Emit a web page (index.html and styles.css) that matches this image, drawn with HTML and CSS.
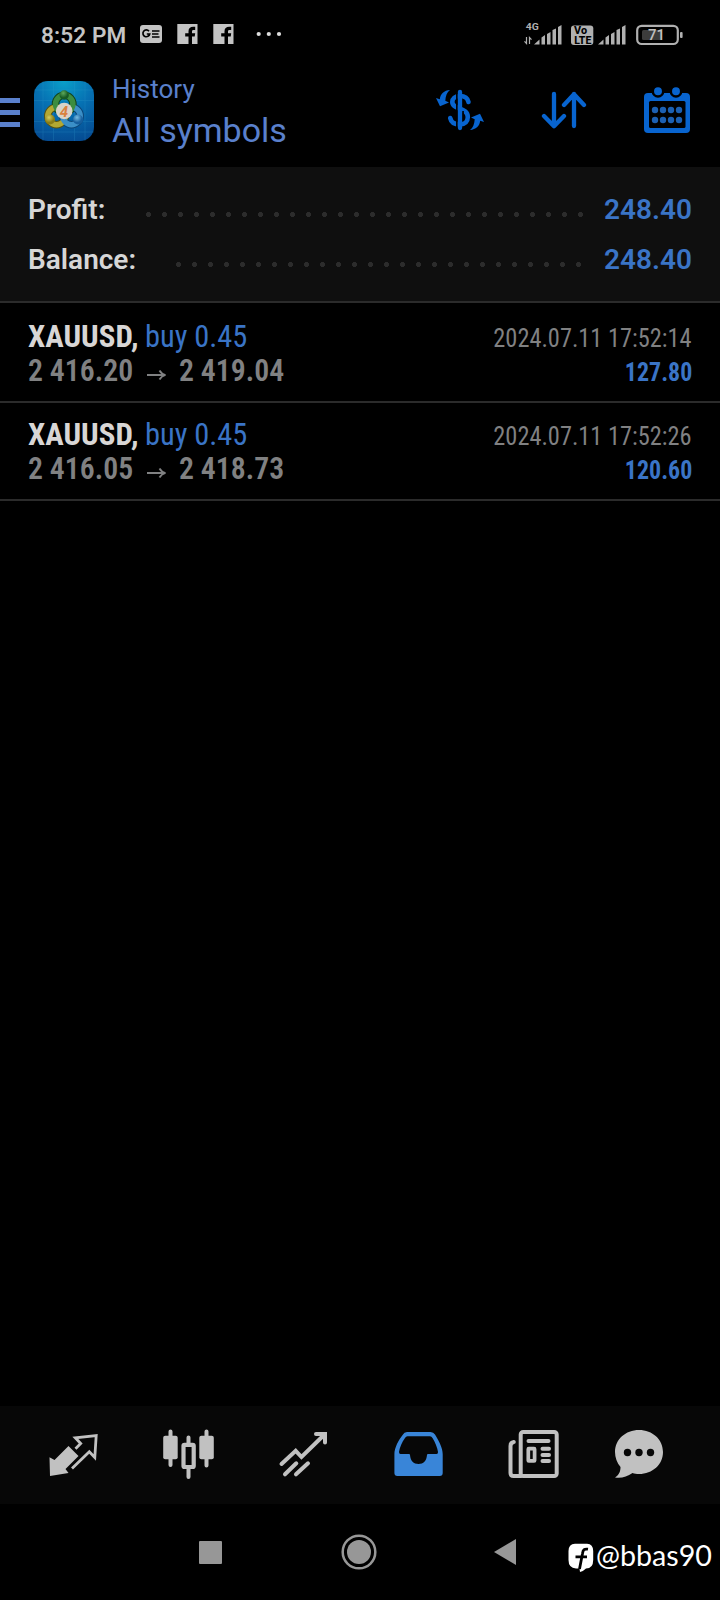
FILE: index.html
```html
<!DOCTYPE html>
<html lang="en">
<head>
<meta charset="utf-8">
<title>History</title>
<link rel="stylesheet" href="styles.css">
</head>
<body>
<div class="screen">
  <div class="status">
    <span class="clock">8:52 PM</span>
    <svg class="notif" width="146" height="24" viewBox="138 22 146 24">
      <rect x="140" y="25" width="22" height="18" rx="3" fill="#c4c4c4"/>
      <path d="M149 31.2A3.4 3.4 0 1 0 149.7 34H146.8" fill="none" stroke="#000" stroke-width="1.7"/>
      <path d="M152 31h7.500M152 34h6.500M152 37h7.500" stroke="#000" stroke-width="1.500"/>
      <g id="fb"><rect x="177.300" y="24" width="20.200" height="20" fill="#c4c4c4"/>
      <path d="M188.500 44v-7.500h-3.300v-3.200h3.300v-2c0-3 1.700-4.600 4.700-4.600h2v3.200h-1.600c-1.300 0-1.600.7-1.600 1.700v1.700h3.200l-.5 3.200h-2.700V44z" fill="#000"/></g>
      <use href="#fb" x="36"/>
      <g fill="#ddd"><circle cx="258.700" cy="34" r="2.100"/><circle cx="268.800" cy="34" r="2.100"/><circle cx="279" cy="34" r="2.100"/></g>
    </svg>
    <svg class="signal" width="164" height="28" viewBox="522 20 164 28">
      <text class="net" x="525.800" y="30" textLength="13" lengthAdjust="spacingAndGlyphs">4G</text>
      <path d="M526.500 37v6.500l-2-2.200M529.500 44v-6.500l2 2.200" fill="none" stroke="#b0b0b0" stroke-width="1.200"/>
      <g id="bars" fill="#b0b0b0"><path d="M534 44.500l5.500-5v5zM541.500 37.500l3.500-2.500v9.500h-3.500zM547 34l3.500-2v12.500H547zM552.500 30l3.500-1.500v16h-3.500zM558 27l3.500-2v19.500H558z"/></g>
      <use href="#bars" x="64"/>
      <rect x="571" y="25.500" width="22.300" height="19.500" rx="3" fill="#b0b0b0"/>
      <text class="volte" x="574" y="34.300" textLength="13" lengthAdjust="spacingAndGlyphs">Vo</text>
      <text class="volte" x="574.300" y="43.500" textLength="17" lengthAdjust="spacingAndGlyphs">LTE</text>
      <rect x="637.200" y="25.800" width="40.600" height="18.200" rx="4.500" fill="none" stroke="#b0b0b0" stroke-width="2.200"/>
      <rect x="642" y="30" width="20" height="10" rx="1.500" fill="#3c3c3c"/>
      <rect x="680" y="32" width="2.600" height="6" rx="1" fill="#b0b0b0"/>
      <text class="batt" x="648" y="40" textLength="17" lengthAdjust="spacingAndGlyphs">71</text>
    </svg>
  </div>

  <header class="head">
    <div class="menu"><i></i><i></i><i></i></div>
    <svg class="logo" width="62" height="62" viewBox="0 0 62 62">
      <defs>
        <radialGradient id="sky" cx=".5" cy="0" r="1.050"><stop offset="0" stop-color="#0aa0c9"/><stop offset=".45" stop-color="#0671b3"/><stop offset="1" stop-color="#054a91"/></radialGradient>
        <radialGradient id="gr" cx=".4" cy=".3"><stop offset="0" stop-color="#5da95b"/><stop offset="1" stop-color="#175a24"/></radialGradient>
        <radialGradient id="ye" cx=".4" cy=".3"><stop offset="0" stop-color="#d7cf5f"/><stop offset="1" stop-color="#897d16"/></radialGradient>
        <radialGradient id="bl" cx=".4" cy=".3"><stop offset="0" stop-color="#76bce3"/><stop offset="1" stop-color="#165f9f"/></radialGradient>
      </defs>
      <rect x="1" y="1" width="60" height="60" rx="14" fill="url(#sky)"/>
      <path d="M20.500 1v60M41.500 1v60M1 20.500h60M1 41.500h60M10 1v60M52 1v60M1 10h60M1 52h60" stroke="#37a0cf" stroke-width=".7" opacity=".3"/>
      <g fill="none" stroke-width="7.500"><circle cx="23.500" cy="36" r="8.700" stroke="#565112"/><circle cx="38.500" cy="36" r="8.700" stroke="#0c4678"/><circle cx="31.200" cy="24" r="8.700" stroke="#12431c"/></g>
      <g fill="none" stroke-width="5.500"><circle cx="23.500" cy="36" r="8.700" stroke="#b3a832"/><circle cx="38.500" cy="36" r="8.700" stroke="#3b8fc7"/><circle cx="31.200" cy="24" r="8.700" stroke="#3c8d40"/></g>
      <circle cx="31.200" cy="15" r="4.700" fill="url(#gr)"/><circle cx="17" cy="39.500" r="5" fill="url(#ye)"/><circle cx="45" cy="39.500" r="5" fill="url(#bl)"/>
      <circle cx="31.200" cy="31" r="8.300" fill="#d8d3c9"/>
      <text class="four" x="26.800" y="36.500">4</text>
    </svg>
    <div class="titles"><span class="t1">History</span><span class="t2">All symbols</span></div>
    <div class="actions">
      <svg width="52" height="44" viewBox="434 89 52 44">
        <path d="M468.500 103C467.500 98.500 464.500 97 460 97C455 97 452.300 99.500 452.300 103C452.300 111 467.800 108 467.800 118C467.800 122.500 465 125.500 460 125.500C454 125.500 451 123 450.200 119" fill="none" stroke="#0864cf" stroke-width="4.600" stroke-linecap="round"/>
        <path d="M456.900 92v38M463 112v10" stroke="#000" stroke-width="1.700"/>
        <path d="M460 93v36" stroke="#0864cf" stroke-width="4.300" stroke-linecap="round"/>
        <path id="swing" d="M450 91C444 91.500 440.500 94.500 439.800 100.200L436 99L440 107.300L449 103.600L445.300 101.800C445.600 97 446.800 93.500 450 91Z" fill="#0864cf"/>
        <use href="#swing" transform="rotate(180 460 111)"/>
      </svg>
      <svg width="46" height="40" viewBox="541 91 46 40"><path d="M554 95v32M544 117l10 10.300L564 117M574 127V95M564 106l10-10.800L584 106" fill="none" stroke="#0864cf" stroke-width="4.300" stroke-linecap="round" stroke-linejoin="round"/></svg>
      <svg width="48" height="50" viewBox="643 85 48 50">
        <rect x="644" y="93" width="46" height="40" rx="4" fill="#0864cf"/>
        <rect x="649" y="101" width="36.500" height="27" rx="1.500" fill="#000"/>
        <g fill="#0864cf" stroke="#000" stroke-width="2.500"><circle cx="658" cy="91.300" r="5.200"/><circle cx="676" cy="91.300" r="5.200"/></g>
        <g fill="#1c60b2"><circle cx="655" cy="110" r="3.200"/><circle cx="663" cy="110" r="3.200"/><circle cx="671" cy="110" r="3.200"/><circle cx="679" cy="110" r="3.200"/><circle cx="655" cy="120" r="3.200"/><circle cx="663" cy="120" r="3.200"/><circle cx="671" cy="120" r="3.200"/><circle cx="679" cy="120" r="3.200"/></g>
      </svg>
    </div>
  </header>

  <section class="summary">
    <div class="sum"><span>Profit:</span><i class="dots d1"></i><b>248.40</b></div>
    <div class="sum"><span>Balance:</span><i class="dots d2"></i><b>248.40</b></div>
  </section>

  <section class="deals">
    <div class="deal">
      <div class="line"><span class="sym">XAUUSD,</span><span class="side">buy 0.45</span><span class="date">2024.07.11 17:52:14</span></div>
      <div class="line"><span class="price">2 416.20</span><svg class="arrow" width="22" height="14" viewBox="0 0 22 14"><path d="M1 7h18M13.500 2.500Q15.500 6 19.500 7Q15.500 8 13.500 11.500" fill="none" stroke="#808182" stroke-width="1.800"/></svg><span class="price">2 419.04</span><b class="gain">127.80</b></div>
    </div>
    <div class="deal">
      <div class="line"><span class="sym">XAUUSD,</span><span class="side">buy 0.45</span><span class="date">2024.07.11 17:52:26</span></div>
      <div class="line"><span class="price">2 416.05</span><svg class="arrow" width="22" height="14" viewBox="0 0 22 14"><path d="M1 7h18M13.500 2.500Q15.500 6 19.500 7Q15.500 8 13.500 11.500" fill="none" stroke="#808182" stroke-width="1.800"/></svg><span class="price">2 418.73</span><b class="gain">120.60</b></div>
    </div>
  </section>

  <nav class="tabs">
    <svg width="52" height="52" viewBox="47 1428 52 52">
      <path d="M49.500 1457.300L54.500 1460L68.500 1446L78.500 1456L65.500 1469L68.500 1473L50 1476Z" fill="#c1c1c1"/>
      <path d="M75.500 1448.800L80.700 1443.500L75.300 1437.800L96.200 1435.500L94.800 1457.500L89.300 1451.700L72 1468.500" fill="none" stroke="#c1c1c1" stroke-width="2.800"/>
    </svg>
    <svg width="53" height="52" viewBox="162 1428 53 52">
      <g fill="#c1c1c1"><rect x="163.200" y="1435.700" width="14.500" height="23.500" rx="2"/><rect x="199.300" y="1435.700" width="14.500" height="23.500" rx="2"/></g>
      <path d="M170.500 1431.500v33.500M206.500 1431.500v34M188.500 1437.500v6M188.500 1469v8" stroke="#c1c1c1" stroke-width="4" stroke-linecap="round"/>
      <rect x="183.500" y="1444.800" width="10.200" height="22.200" rx="1" fill="#070707" stroke="#c1c1c1" stroke-width="4.200"/>
    </svg>
    <svg width="52" height="52" viewBox="278 1428 52 52"><path d="M281.500 1464L295.700 1450.800L301.500 1457L324.500 1434.500M316 1434h9v8.500M285 1474.300L296.300 1463.300M296 1474.300L308 1463.300" fill="none" stroke="#c1c1c1" stroke-width="4" stroke-linecap="round"/></svg>
    <svg width="52" height="52" viewBox="393 1428 52 52"><path fill-rule="evenodd" fill="#3985d8" d="M403 1434.500Q404 1432 407 1432H430.500Q433.500 1432 435 1434.500C439 1441 442.700 1448 442.700 1454V1473Q442.700 1476 439.700 1476H397.400Q394.400 1476 394.400 1473V1454C394.400 1448 398.500 1440 403 1434.500ZM407.500 1436.300Q405.800 1436.300 405 1438C402 1442 399.500 1448 399 1452Q399 1454 400.500 1454H409Q410 1454 410 1455C410.500 1461 413.500 1464 418.500 1464S426.500 1461 427 1455Q427 1454 428 1454H436.500Q438.200 1454 438 1452C437.500 1448 435 1442 432.500 1438Q431.500 1436.300 430 1436.300Z"/></svg>
    <svg width="52" height="52" viewBox="508 1428 52 52">
      <g fill="none" stroke="#c1c1c1" stroke-width="4" stroke-linecap="round"><rect x="520.700" y="1432" width="36" height="44" rx="2.500"/><path d="M513.800 1442Q510.500 1442.500 510.500 1446V1473Q510.500 1476 513.500 1476H521M528.500 1441h20M542.500 1448.800h6.500M542.500 1455h6.500M542.500 1461h6.500" /><rect x="528.300" y="1448.700" width="6.300" height="12.200" rx=".5" stroke-width="3.700"/></g>
    </svg>
    <svg width="52" height="52" viewBox="613 1428 52 52">
      <path d="M639 1430C652.500 1430 663 1439.500 663 1452S652.500 1474 639 1474C636.500 1474 634.500 1473.800 632.500 1473C627 1477 621 1478.500 615 1477.500C619 1475 620.500 1471.500 620.500 1467C617 1463 615 1457.500 615 1452C615 1439.500 625.500 1430 639 1430Z" fill="#c1c1c1"/>
      <g fill="#070707"><circle cx="627.500" cy="1452.500" r="3.700"/><circle cx="639" cy="1452.500" r="3.700"/><circle cx="650.500" cy="1452.500" r="3.700"/></g>
    </svg>
  </nav>

  <div class="sysnav">
    <i class="recent"></i>
    <svg width="36" height="36" viewBox="0 0 36 36"><circle cx="18" cy="18" r="16.300" fill="none" stroke="#979797" stroke-width="2.500"/><circle cx="18" cy="18" r="12" fill="#979797"/></svg>
    <svg class="back" width="24" height="28" viewBox="0 0 24 28"><path d="M1 14L23 1v26Z" fill="#979797"/></svg>
    <svg class="mark" width="150" height="52" viewBox="566 1532 150 52">
      <path d="M575 1543.700H587Q593.200 1544 593.200 1551V1560Q593.200 1568.500 586 1568.500Q583 1571.500 580 1572L579.500 1568.500H576Q568.500 1568 568.500 1560V1551Q568.500 1544 575 1543.700Z" fill="#fff"/>
      <path d="M579.500 1569L582.500 1553.500C583 1549.500 584.500 1548.700 588 1549.200M575.500 1556.800H587" fill="none" stroke="#000" stroke-width="2.800"/>
      <text class="handle" x="596" y="1565.700" textLength="116" lengthAdjust="spacingAndGlyphs">@bbas90</text>
    </svg>
  </div>
</div>
</body>
</html>
```
FILE: styles.css
```css
* { box-sizing: border-box; }
body { margin: 0; background: #000; font-family: Roboto, "Liberation Sans", sans-serif; }
.screen { width: 720px; height: 1600px; display: flex; flex-direction: column; background: #000; overflow: hidden; }
svg { display: block; flex: none; }
span, b { white-space: nowrap; }

.status { height: 68px; padding: 0 34px 0 41px; display: flex; align-items: center; }
.clock { width: 97px; font-size: 22.500px; font-weight: 600; letter-spacing: .15px; color: #c4c4c4; line-height: 68px; padding-top: 1px; }
.signal { margin-left: auto; }
.net { font-size: 9px; font-weight: 700; fill: #b0b0b0; }
.volte { font-size: 10px; font-weight: 800; fill: #000; }
.batt { font-size: 14px; font-weight: 500; fill: #c0c0c0; }

.head { height: 99px; display: flex; align-items: flex-start; }
.menu { display: flex; flex-direction: column; gap: 7px; width: 20px; margin-top: 30px; }
.menu i { height: 5px; background: #5a80cc; }
.logo { margin: 12px 0 0 13px; }
.four { font: italic 700 15px Roboto, sans-serif; fill: #d9813f; }
.titles { display: flex; flex-direction: column; margin: 5px 0 0 17px; color: #5a80cc; }
.t1 { font-size: 26px; line-height: 33px; }
.t2 { font-size: 34px; line-height: 49px; }
.actions { display: flex; align-items: center; height: 50px; margin: 17px 29px 0 auto; gap: 55px; }
.actions svg:last-child { margin-left: 1px; }

.summary { height: 136px; padding: 18px 28px 0; background: #0f0f0f; border-bottom: 2px solid #2b2b2b; }
.sum { display: flex; height: 50px; line-height: 50px; font-size: 28px; font-weight: 600; color: #d6d6d6; }
.sum b { width: 88px; text-align: right; margin-left: 21px; font-weight: 600; color: #3a74c6; }
.dots { height: 5px; margin: 27px 0 0 auto; background: radial-gradient(circle at 2.500px 2.500px, #2c2c2c 2.200px, transparent 2.800px) 0 0 / 16px 5px repeat-x; }
.d1 { width: 437px; }
.d2 { width: 405px; }
.d2 + b { margin-left: 23px; }

.deals { padding-top: 2px; }
.deal { height: 98px; padding: 14px 28px 0; border-bottom: 2px solid #2b2b2b; font-family: "Roboto Condensed", Roboto, sans-serif; font-stretch: 75%; }
.line { display: flex; height: 34px; line-height: 34px; font-size: 32px; }
.line span, .line b { transform-origin: left; }
.sym { font-weight: 700; color: #d8d6d5; transform: scaleX(.965); }
.side { margin-left: 2.500px; color: #3a74c6; transform: scaleX(.95); }
.price { font-weight: 600; color: #808182; transform: scaleX(.93); }
.arrow { margin: 15px 11px 0 5px; }
.line .date, .line .gain { margin-left: auto; font-size: 26px; line-height: 38px; transform-origin: right; }
.date { color: #808182; transform: scaleX(.937); }
.gain { color: #3a74c6; transform: scaleX(.92); }

.tabs { margin-top: auto; height: 98px; padding: 22px 0 0 47px; display: flex; gap: 63px; background: #070707; }
.tabs svg:last-child { margin-left: -10px; }

.sysnav { height: 96px; padding: 0 4px 0 199px; display: flex; align-items: center; }
.recent { width: 23px; height: 23px; background: #979797; border-radius: 1px; margin-right: 119px; }
.back { margin-left: 116px; }
.mark { margin: 12px 0 0 auto; }
.handle { font-family: Lato, sans-serif; font-size: 29px; font-weight: 400; fill: #fff; }
```
